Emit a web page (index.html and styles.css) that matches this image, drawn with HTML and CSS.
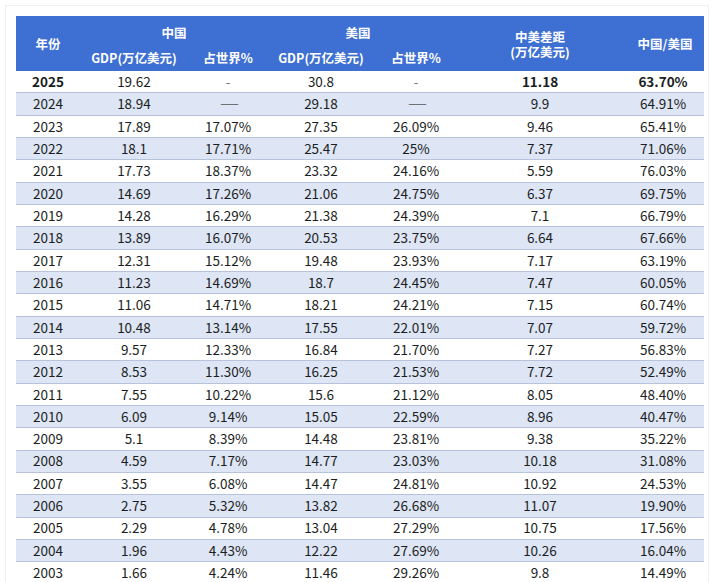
FILE: index.html
```html
<!DOCTYPE html>
<html lang="zh">
<head>
<meta charset="utf-8">
<title>中美GDP对比</title>
<link rel="stylesheet" href="styles.css">
</head>
<body>
<div class="card">
  <div class="table">
    <div class="head">
      <div class="h-year">年份</div>
      <div class="h-group h-cn">中国</div>
      <div class="h-group h-us">美国</div>
      <div class="h-gap"><span class="l1">中美差距</span><span class="l2">(万亿美元)</span></div>
      <div class="h-ratio">中国/美国</div>
      <div class="h-sub c2">GDP(万亿美元)</div>
      <div class="h-sub c3">占世界%</div>
      <div class="h-sub c4">GDP(万亿美元)</div>
      <div class="h-sub c5">占世界%</div>
    </div>
    <div class="row first"><span class="b">2025</span><span>19.62</span><span class="na">-</span><span>30.8</span><span class="na">-</span><span class="b">11.18</span><span class="b">63.70%</span></div>
    <div class="row alt"><span>2024</span><span>18.94</span><span class="dash">——</span><span>29.18</span><span class="dash">——</span><span>9.9</span><span>64.91%</span></div>
    <div class="row"><span>2023</span><span>17.89</span><span>17.07%</span><span>27.35</span><span>26.09%</span><span>9.46</span><span>65.41%</span></div>
    <div class="row alt"><span>2022</span><span>18.1</span><span>17.71%</span><span>25.47</span><span>25%</span><span>7.37</span><span>71.06%</span></div>
    <div class="row"><span>2021</span><span>17.73</span><span>18.37%</span><span>23.32</span><span>24.16%</span><span>5.59</span><span>76.03%</span></div>
    <div class="row alt"><span>2020</span><span>14.69</span><span>17.26%</span><span>21.06</span><span>24.75%</span><span>6.37</span><span>69.75%</span></div>
    <div class="row"><span>2019</span><span>14.28</span><span>16.29%</span><span>21.38</span><span>24.39%</span><span>7.1</span><span>66.79%</span></div>
    <div class="row alt"><span>2018</span><span>13.89</span><span>16.07%</span><span>20.53</span><span>23.75%</span><span>6.64</span><span>67.66%</span></div>
    <div class="row"><span>2017</span><span>12.31</span><span>15.12%</span><span>19.48</span><span>23.93%</span><span>7.17</span><span>63.19%</span></div>
    <div class="row alt"><span>2016</span><span>11.23</span><span>14.69%</span><span>18.7</span><span>24.45%</span><span>7.47</span><span>60.05%</span></div>
    <div class="row"><span>2015</span><span>11.06</span><span>14.71%</span><span>18.21</span><span>24.21%</span><span>7.15</span><span>60.74%</span></div>
    <div class="row alt"><span>2014</span><span>10.48</span><span>13.14%</span><span>17.55</span><span>22.01%</span><span>7.07</span><span>59.72%</span></div>
    <div class="row"><span>2013</span><span>9.57</span><span>12.33%</span><span>16.84</span><span>21.70%</span><span>7.27</span><span>56.83%</span></div>
    <div class="row alt"><span>2012</span><span>8.53</span><span>11.30%</span><span>16.25</span><span>21.53%</span><span>7.72</span><span>52.49%</span></div>
    <div class="row"><span>2011</span><span>7.55</span><span>10.22%</span><span>15.6</span><span>21.12%</span><span>8.05</span><span>48.40%</span></div>
    <div class="row alt"><span>2010</span><span>6.09</span><span>9.14%</span><span>15.05</span><span>22.59%</span><span>8.96</span><span>40.47%</span></div>
    <div class="row"><span>2009</span><span>5.1</span><span>8.39%</span><span>14.48</span><span>23.81%</span><span>9.38</span><span>35.22%</span></div>
    <div class="row alt"><span>2008</span><span>4.59</span><span>7.17%</span><span>14.77</span><span>23.03%</span><span>10.18</span><span>31.08%</span></div>
    <div class="row"><span>2007</span><span>3.55</span><span>6.08%</span><span>14.47</span><span>24.81%</span><span>10.92</span><span>24.53%</span></div>
    <div class="row alt"><span>2006</span><span>2.75</span><span>5.32%</span><span>13.82</span><span>26.68%</span><span>11.07</span><span>19.90%</span></div>
    <div class="row"><span>2005</span><span>2.29</span><span>4.78%</span><span>13.04</span><span>27.29%</span><span>10.75</span><span>17.56%</span></div>
    <div class="row alt"><span>2004</span><span>1.96</span><span>4.43%</span><span>12.22</span><span>27.69%</span><span>10.26</span><span>16.04%</span></div>
    <div class="row"><span>2003</span><span>1.66</span><span>4.24%</span><span>11.46</span><span>29.26%</span><span>9.8</span><span>14.49%</span></div>
  </div>
</div>
</body>
</html>
```
FILE: styles.css
```css
html, body {
  margin: 0;
  padding: 0;
  background: #ffffff;
}
body {
  font-family: "Noto Sans CJK SC", "Noto Sans", sans-serif;
  color: #1a1d22;
  height: 582px;
  overflow: hidden;
}
.card {
  margin: 5px 11px 0 5px;
  padding: 10px 0 0 10px;
  border: 1px solid #eef0f3;
  border-bottom: none;
  height: 600px;
  box-sizing: border-box;
  width: 704px;
}
.table {
  width: 688px;
}
.head {
  display: grid;
  grid-template-columns: 64px 108px 80px 106px 84px 164px 82px;
  grid-template-rows: 31px 24px;
  background: #3e6fd2;
  color: #ffffff;
  font-weight: 700;
  font-size: 12.5px;
}
.head > div {
  display: flex;
  align-items: center;
  justify-content: center;
  text-align: center;
}
.h-year { grid-column: 1; grid-row: 1 / 3; }
.h-cn { grid-column: 2 / 4; grid-row: 1; padding-top: 2px; }
.h-us { grid-column: 4 / 6; grid-row: 1; padding-top: 2px; padding-right: 10px; }
.head > .h-gap {
  grid-column: 6;
  grid-row: 1 / 3;
  flex-direction: column;
  padding-top: 1px;
}
.h-gap .l1, .h-gap .l2 {
  display: block;
  line-height: 15px;
  height: 15px;
}
.h-ratio { grid-column: 7; grid-row: 1 / 3; padding-left: 4px; }
.h-sub { grid-row: 2; padding-bottom: 4px; }
.c2 { grid-column: 2; }
.c3 { grid-column: 3; }
.c4 { grid-column: 4; }
.c5 { grid-column: 5; }
.row {
  display: grid;
  grid-template-columns: 64px 108px 80px 106px 84px 164px 82px;
  height: 22.34px;
  box-sizing: border-box;
  border-bottom: 1px solid #b7c3da;
  font-size: 13.5px;
  background: #ffffff;
}
.row.alt {
  background: #dee5f5;
}
.row > span {
  display: flex;
  align-items: center;
  justify-content: center;
  line-height: 1;
}
.row > span.b {
  font-weight: 700;
}
.row > span.na {
  color: #777;
}
.row > span.dash {
  color: #555;
  letter-spacing: -3px;
  font-size: 11px;
}
```
